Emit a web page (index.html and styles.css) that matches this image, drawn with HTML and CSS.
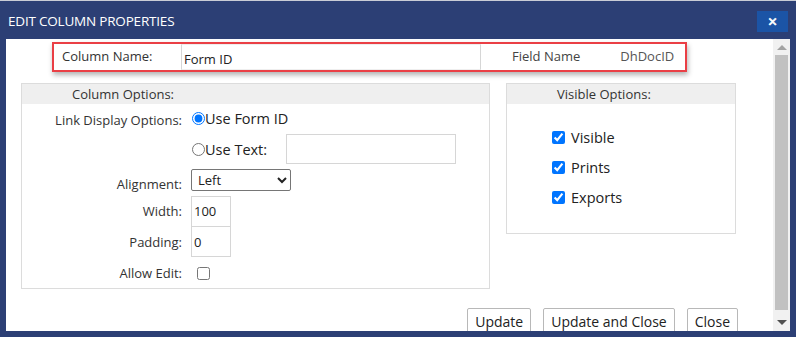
FILE: index.html
```html
<!DOCTYPE html>
<html>
<head>
<meta charset="utf-8">
<link rel="stylesheet" href="styles.css">
</head>
<body>
<div class="dialog">
  <div class="titlebar">
    <span class="title">EDIT COLUMN PROPERTIES</span>
    <button class="close-btn">&#x2715;</button>
  </div>
  <div class="content">
    <div class="main">
      <div class="namebar">
        <span class="name-label">Column Name:</span>
        <input class="name-input" type="text" value="Form ID">
        <span class="field-label">Field Name</span>
        <span class="field-value">DhDocID</span>
      </div>
      <div class="panels">
        <div class="box col-options">
          <div class="box-head col-head">Column Options:</div>
          <div class="form">
            <div class="row row-link">
              <span class="lbl">Link Display Options:</span>
              <label class="radio"><input type="radio" name="ld" checked>Use Form ID</label>
            </div>
            <div class="row row-text">
              <span class="lbl"></span>
              <label class="radio"><input type="radio" name="ld">Use Text:</label>
              <input class="text-input" type="text">
            </div>
            <div class="row row-align">
              <span class="lbl">Alignment:</span>
              <select class="sel"><option>Left</option></select>
            </div>
            <div class="row row-width">
              <span class="lbl">Width:</span>
              <input class="num" type="text" value="100">
            </div>
            <div class="row row-pad">
              <span class="lbl">Padding:</span>
              <input class="num" type="text" value="0">
            </div>
            <div class="row row-edit">
              <span class="lbl">Allow Edit:</span>
              <input class="chk-plain" type="checkbox">
            </div>
          </div>
        </div>
        <div class="box vis-options">
          <div class="box-head vis-head">Visible Options:</div>
          <div class="checks">
            <label class="chk"><input type="checkbox" checked>Visible</label>
            <label class="chk"><input type="checkbox" checked>Prints</label>
            <label class="chk"><input type="checkbox" checked>Exports</label>
          </div>
        </div>
      </div>
      <div class="buttons">
        <button class="btn">Update</button>
        <button class="btn">Update and Close</button>
        <button class="btn">Close</button>
      </div>
    </div>
    <div class="scrollbar">
      <div class="arrow up"></div>
      <div class="thumb"></div>
      <div class="arrow down"></div>
    </div>
  </div>
</div>
</body>
</html>
```
FILE: styles.css
```css
* { box-sizing: border-box; }
html, body { margin: 0; padding: 0; }
body {
  background: #2c3f75;
  font-family: "Open Sans", "Noto Sans", sans-serif;
  color: #333;
  width: 796px;
  height: 337px;
  overflow: hidden;
}
.dialog {
  height: 337px;
  display: flex;
  flex-direction: column;
  border-top: 1px solid #c9ccd6;
}
.titlebar {
  height: 38px;
  display: flex;
  align-items: center;
  justify-content: space-between;
  padding: 0 8px 0 8px;
}
.title {
  color: #fff;
  font-size: 13.5px;
  letter-spacing: -0.2px;
  margin-top: 1px;
}
.close-btn {
  width: 31px;
  height: 21px;
  margin-top: 3px;
  background: #1b54a6;
  border: none;
  color: #fff;
  font-size: 12px;
  font-weight: bold;
  padding: 0;
  font-family: "DejaVu Sans", sans-serif;
  -webkit-text-stroke: 0.6px #fff;
}
.content {
  flex: 1;
  margin: 0 6px 6px 6px;
  background: #fff;
  display: flex;
  overflow: hidden;
}
.main {
  flex: 1;
  min-width: 0;
  overflow: hidden;
}
.namebar {
  margin: 3px 0 0 46px;
  width: 635px;
  height: 30px;
  border: 2px solid #ea3f45;
  box-shadow: 1px 3px 5px rgba(0,0,0,0.3);
  display: flex;
  align-items: center;
  font-size: 13px;
}
.name-label {
  width: 127px;
  padding-left: 8px;
  padding-bottom: 3px;
}
.name-input {
  width: 300px;
  height: 26px;
  border: 1px solid #d6d6d6;
  border-top-color: #eee;
  border-bottom-color: #eee;
  font-family: inherit;
  font-size: 13px;
  color: #222;
  padding: 3px 2px 0 2px;
  outline: none;
}
.field-label {
  margin-left: 31px;
  color: #444;
  padding-bottom: 2px;
}
.field-value {
  margin-left: 40px;
  color: #555;
  padding-bottom: 2px;
}
.panels {
  display: flex;
  align-items: flex-start;
  margin: 11px 0 0 15px;
  gap: 16px;
}
.box {
  border: 1px solid #dcdcdc;
}
.box-head {
  background: #efefef;
  height: 20px;
  font-size: 13px;
  line-height: 20px;
  color: #333;
}
.col-options {
  width: 469px;
  height: 206px;
}
.col-head { padding-left: 50px; }
.vis-options {
  width: 230px;
  height: 151px;
}
.vis-head { padding-left: 50px; }
.form {
  display: flex;
  flex-direction: column;
  font-size: 13px;
}
.row {
  display: flex;
  align-items: center;
}
.lbl {
  width: 160px;
  text-align: right;
  flex-shrink: 0;
  margin-right: 9px;
  color: #333;
}
.radio {
  display: flex;
  align-items: center;
  font-size: 14.5px;
  font-weight: 500;
  color: #222;
}
.radio input {
  margin: 0 0 0 1px;
  width: 13px;
  height: 13px;
}
.row-link { height: 29px; margin-top: 0; }
.row-link .lbl { padding-top: 2px; }
.row-text { height: 30px; margin-top: 1px; }
.text-input {
  width: 170px;
  height: 30px;
  margin-left: 19px;
  border: 1px solid #d6d6d6;
  outline: none;
}
.row-align { height: 22px; margin-top: 5px; }
.row-align .lbl { padding-top: 7px; }
.sel {
  width: 100px;
  height: 22px;
  font-family: inherit;
  font-size: 13px;
  color: #222;
  border: 1px solid #767676;
  border-radius: 2px;
  background: #fff;
  padding: 0 2px;
}
.row-width { height: 30px; margin-top: 5px; }
.row-pad { height: 31px; }
.num {
  width: 40px;
  height: 31px;
  border: 1px solid #d6d6d6;
  font-family: inherit;
  font-size: 13px;
  color: #222;
  padding: 0 2px;
  outline: none;
}
.row-edit { height: 30px; margin-top: 1px; }
.chk-plain {
  margin: 0 0 0 6px;
  width: 13px;
  height: 13px;
}
.checks {
  display: flex;
  flex-direction: column;
  padding: 18px 0 0 45px;
}
.chk {
  display: flex;
  align-items: center;
  height: 30px;
  font-size: 14.5px;
  font-weight: 500;
  color: #222;
}
.chk input {
  width: 13px;
  height: 13px;
  margin: 0 6px 0 0;
}
.buttons {
  display: flex;
  justify-content: flex-end;
  gap: 12px;
  padding-right: 35px;
  margin-top: 19px;
}
.btn {
  height: 28px;
  padding: 0 7px 2px 7px;
  background: #fff;
  border: 1px solid #b8b8b8;
  border-radius: 2px;
  font-family: inherit;
  font-size: 14px;
  color: #222;
}
.scrollbar {
  width: 17px;
  background: #f1f1f1;
  display: flex;
  flex-direction: column;
  align-items: center;
}
.arrow {
  width: 0; height: 0;
  border-left: 5px solid transparent;
  border-right: 5px solid transparent;
}
.arrow.up {
  border-bottom: 5px solid #a3a3a3;
  margin: 6px 0 5px 0;
}
.thumb {
  width: 13px;
  flex: 1;
  background: #c1c1c1;
}
.arrow.down {
  border-top: 5px solid #505050;
  margin: 10px 0 6px 0;
}
```
